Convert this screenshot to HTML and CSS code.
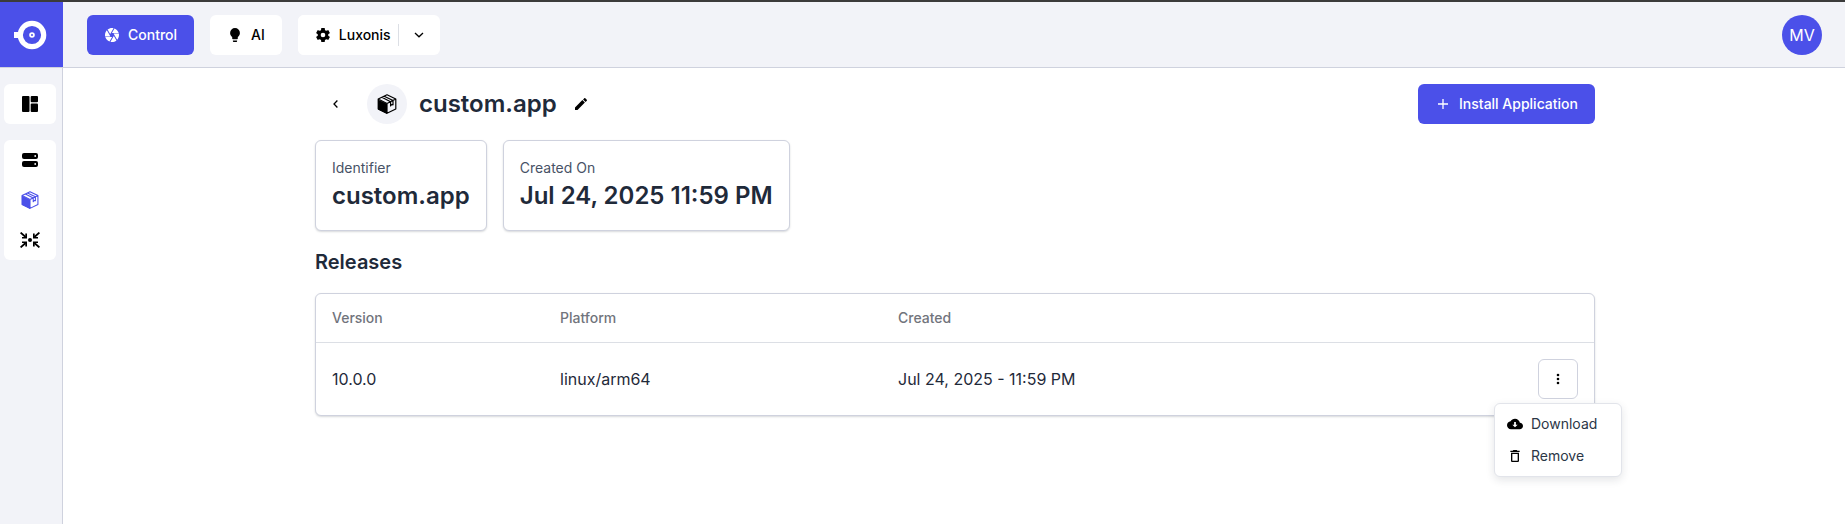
FILE: index.html
```html
<!DOCTYPE html>
<html lang="en">
<head>
<meta charset="utf-8">
<meta name="viewport" content="width=device-width, initial-scale=1">
<title>custom.app</title>
<link rel="stylesheet" href="styles.css">
</head>
<body>
<svg class="defs" aria-hidden="true">
  <symbol id="package" viewBox="0 0 20 20">
    <path fill="currentColor" d="M1 5.4 10 9.8V20L1 15.4Z"/>
    <path fill="none" stroke="currentColor" stroke-width="1.2" stroke-linejoin="round" d="M10 .8 18.8 5v10L10 19.3 1.200 15V5ZM1.200 5 10 9.500 18.800 5M10 9.500v9.700M4.800 3.300 13.600 7.700M7.200 2.200 16 6.500M13.600 7.700v4.300l1.100-1.500 1.300.4V6.500"/>
  </symbol>
</svg>
<header class="topbar">
  <a class="logo" href="#" aria-label="Home">
    <svg width="34" height="30" viewBox="0 0 34 30" fill="none" stroke="#fff">
      <circle cx="19" cy="15" r="11.7" stroke-width="5.2"/>
      <circle cx="19" cy="15" r="1.9" stroke-width="1.8"/>
      <path d="M1 15h6" stroke-width="6"/>
    </svg>
  </a>
  <nav class="apps" aria-label="Sections">
    <button class="btn btn-primary" type="button">
      <svg width="14" height="14" viewBox="2 2 20 20" fill="currentColor"><path d="M13.73 15 9.83 21.76C10.53 21.91 11.25 22 12 22c2.4 0 4.6-.85 6.32-2.25L14.66 13.4M2.46 15c.92 2.92 3.15 5.26 5.99 6.34L12.12 15M8.54 12l-3.9-6.75C3 7 2 9.39 2 12c0 .68.07 1.35.2 2h7.49M21.8 10h-7.49l.29.5 4.76 8.25C21 16.97 22 14.6 22 12c0-.69-.07-1.36-.2-2M21.54 9c-.92-2.93-3.15-5.26-5.99-6.34L11.88 9M9.4 10.5l4.77-8.26C13.47 2.09 12.75 2 12 2 9.6 2 7.4 2.84 5.68 4.25l3.66 6.35.06-.1Z"/></svg>
      Control
    </button>
    <button class="btn" type="button">
      <svg width="14" height="14" viewBox="2 2 20 20" fill="currentColor"><path d="M12 2a7 7 0 0 0-7 7c0 2.38 1.19 4.47 3 5.74V17a1 1 0 0 0 1 1h6a1 1 0 0 0 1-1v-2.26c1.81-1.27 3-3.36 3-5.74a7 7 0 0 0-7-7M9 21a1 1 0 0 0 1 1h4a1 1 0 0 0 1-1v-1H9v1Z"/></svg>
      AI
    </button>
    <div class="split">
      <button class="btn" type="button">
        <svg width="14" height="14" viewBox="2.400 2.400 19.200 19.200" fill="currentColor"><path fill-rule="evenodd" d="M19.14 12.94c.04-.3.06-.61.06-.94 0-.32-.02-.64-.07-.94l2.03-1.58c.18-.14.23-.41.12-.61l-1.92-3.32c-.12-.22-.37-.29-.59-.22l-2.39.96c-.5-.38-1.03-.7-1.62-.94l-.36-2.54c-.04-.24-.24-.41-.48-.41h-3.84c-.24 0-.43.17-.47.41l-.36 2.54c-.59.24-1.13.57-1.62.94l-2.39-.96c-.22-.08-.47 0-.59.22L2.74 8.87c-.12.21-.08.47.12.61l2.03 1.58c-.05.3-.09.63-.09.94s.02.64.07.94l-2.03 1.58c-.18.14-.23.41-.12.61l1.92 3.32c.12.22.37.29.59.22l2.39-.96c.5.38 1.03.7 1.62.94l.36 2.54c.05.24.24.41.48.41h3.84c.24 0 .44-.17.47-.41l.36-2.54c.59-.24 1.13-.56 1.62-.94l2.39.96c.22.08.47 0 .59-.22l1.92-3.32c.12-.22.07-.47-.12-.61l-2.01-1.58ZM12 15.2a3.2 3.2 0 1 1 0-6.4 3.2 3.2 0 0 1 0 6.4Z"/></svg>
        Luxonis
      </button>
      <button class="split-toggle" type="button" aria-label="Switch team">
        <svg width="10" height="6" viewBox="0 0 10 6" fill="none" stroke="currentColor" stroke-width="1.3"><path d="m1 1 4 3.800L9 1"/></svg>
      </button>
    </div>
  </nav>
  <button class="avatar" type="button">MV</button>
</header>
<div class="layout">
  <nav class="sidebar" aria-label="Main">
    <div class="group">
      <a href="#" aria-label="Dashboard">
        <svg width="16" height="16" viewBox="0 0 16 16" fill="currentColor"><rect width="7.500" height="16" rx="1"/><rect x="8.700" width="7.300" height="6.300" rx="1"/><rect x="8.700" y="7.500" width="7.300" height="8.500" rx="1"/></svg>
      </a>
    </div>
    <div class="group">
      <a href="#" aria-label="Devices">
        <svg width="16" height="14" viewBox="0 0 16 14" fill="currentColor"><rect width="16" height="6" rx="2"/><rect y="8" width="16" height="6" rx="2"/><circle cx="13.2" cy="3" r=".9" fill="#fff"/><circle cx="13.2" cy="11" r=".9" fill="#fff"/></svg>
      </a>
      <a class="active" href="#" aria-label="Applications">
        <svg width="18" height="18"><use href="#package"/></svg>
      </a>
      <a href="#" aria-label="Hub">
        <svg width="20" height="16" viewBox="0 0 20 16" fill="none" stroke="currentColor" stroke-width="1.8"><circle cx="10" cy="8" r="2" fill="currentColor" stroke="none"/><path d="m.6.6 5 4.400M.6 15.400l5-4.400M19.400.6l-5 4.400M19.400 15.400l-5-4.400"/><path fill="currentColor" stroke="none" d="M7 1.600v5H2V4.900h3.300V1.600ZM13 1.600v5h5V4.900h-3.300V1.600ZM7 14.400v-5H2v1.700h3.300v3.300ZM13 14.400v-5h5v1.700h-3.300v3.300Z"/></svg>
      </a>
    </div>
  </nav>
  <main class="main">
    <div class="container">
      <div class="page-head">
        <button class="icon-btn" type="button" aria-label="Back">
          <svg width="5" height="8" viewBox="0 0 5 8" fill="none" stroke="currentColor" stroke-width="1.3"><path d="M4.400.5 1 4l3.400 3.500"/></svg>
        </button>
        <span class="app-icon"><svg width="20" height="20"><use href="#package"/></svg></span>
        <h1 class="title">custom.app</h1>
        <button class="icon-btn edit" type="button" aria-label="Edit name">
          <svg width="12" height="12" viewBox="3 3 18 18" fill="currentColor"><path d="M20.71 7.04c.39-.39.39-1.04 0-1.41l-2.34-2.34c-.37-.39-1.02-.39-1.41 0l-1.84 1.83 3.75 3.75M3 17.25V21h3.75L17.81 9.93l-3.75-3.75L3 17.25Z"/></svg>
        </button>
        <button class="btn btn-primary install" type="button">
          <svg width="14" height="14" viewBox="0 0 14 14" fill="none" stroke="currentColor" stroke-width="1.3"><path d="M7 2v10M2 7h10"/></svg>
          Install Application
        </button>
      </div>
      <dl class="facts">
        <div class="card fact"><dt>Identifier</dt><dd>custom.app</dd></div>
        <div class="card fact"><dt>Created On</dt><dd>Jul 24, 2025 11:59 PM</dd></div>
      </dl>
      <h2 class="subtitle">Releases</h2>
      <div class="card">
        <table class="releases">
          <thead>
            <tr><th class="col-version" scope="col">Version</th><th class="col-platform" scope="col">Platform</th><th scope="col">Created</th><th class="col-actions"></th></tr>
          </thead>
          <tbody>
            <tr>
              <td>10.0.0</td>
              <td>linux/arm64</td>
              <td>Jul 24, 2025 - 11:59 PM</td>
              <td>
                <div class="actions">
                  <button class="more" type="button" aria-label="More actions" aria-expanded="true">
                    <svg width="4" height="12" viewBox="0 0 4 12" fill="currentColor"><circle cx="2" cy="2" r="1.3"/><circle cx="2" cy="6" r="1.3"/><circle cx="2" cy="10" r="1.3"/></svg>
                  </button>
                  <div class="menu" role="menu">
                    <button type="button" role="menuitem">
                      <svg width="16" height="16" viewBox="0 0 24 24" fill="currentColor"><path fill-rule="evenodd" d="M19.35 10.04C18.67 6.59 15.64 4 12 4 9.11 4 6.6 5.64 5.35 8.04 2.34 8.36 0 10.91 0 14c0 3.31 2.69 6 6 6h13c2.76 0 5-2.24 5-5 0-2.64-2.05-4.78-4.65-4.96ZM16 13l-4 4-4-4h2.7V9h2.6v4H16Z"/></svg>
                      Download
                    </button>
                    <button type="button" role="menuitem">
                      <svg width="16" height="16" viewBox="0 0 24 24" fill="currentColor"><path fill-rule="evenodd" d="M6 19c0 1.1.9 2 2 2h8c1.1 0 2-.9 2-2V7H6v12ZM8 9h8v10H8V9Zm7.500-5-1-1h-5l-1 1H5v2h14V4Z"/></svg>
                      Remove
                    </button>
                  </div>
                </div>
              </td>
            </tr>
          </tbody>
        </table>
      </div>
    </div>
  </main>
</div>
</body>
</html>
```
FILE: styles.css
```css
:root {
  --primary: #4b50e9;
  --surface: #f2f3f8;
  --border: #cfd2de;
  --line: #dcdfe5;
  --text: #1f2a3a;
}

* { box-sizing: border-box; }

body {
  display: flex;
  flex-direction: column;
  min-height: 100vh;
  margin: 0;
  border-top: 2px solid #3b3b3b;
  background: #fff;
  color: var(--text);
  font: 16px/24px Inter, "Liberation Sans", sans-serif;
}

button {
  margin: 0;
  padding: 0;
  border: 0;
  background: none;
  color: #000;
  font: inherit;
  cursor: pointer;
}

svg { display: block; flex: none; }

.defs { position: absolute; width: 0; height: 0; }

.topbar {
  display: flex;
  align-items: center;
  height: 66px;
  padding-right: 23px;
  border-bottom: 1px solid var(--border);
  background: var(--surface);
}

.logo {
  display: flex;
  align-items: center;
  justify-content: center;
  align-self: stretch;
  width: 63px;
  padding-right: 4px;
  background: var(--primary);
}

.apps { display: flex; gap: 16px; margin-left: 24px; }

.btn {
  display: flex;
  align-items: center;
  gap: 9px;
  height: 40px;
  padding: 0 17px 0 18px;
  border-radius: 6px;
  background: #fff;
  font-size: 14px;
  font-weight: 500;
  line-height: 20px;
}

.btn-primary { background: var(--primary); color: #fff; }

.split { display: flex; align-items: center; border-radius: 6px; background: #fff; }
.split .btn { padding-right: 7px; }

.split-toggle {
  display: flex;
  align-items: center;
  justify-content: center;
  width: 42px;
  height: 22px;
  border-left: 1px solid var(--line);
}

.avatar {
  width: 40px;
  height: 40px;
  margin-left: auto;
  border-radius: 50%;
  background: var(--primary);
  color: #fff;
}

.layout { display: flex; flex: 1; }

.sidebar {
  display: flex;
  flex-direction: column;
  gap: 16px;
  width: 63px;
  padding: 16px 6px 16px 4px;
  border-right: 1px solid var(--border);
  background: var(--surface);
}

.group { border-radius: 6px; background: #fff; }

.group a {
  display: flex;
  align-items: center;
  justify-content: center;
  height: 40px;
  color: #000;
}

.group .active { color: var(--primary); }

.main { flex: 1; min-width: 0; padding: 16px 0 24px 2px; }
.container { max-width: 1280px; margin: 0 auto; }

.page-head { display: flex; align-items: center; }

.icon-btn {
  display: flex;
  align-items: center;
  justify-content: center;
  width: 40px;
  height: 40px;
}

.app-icon {
  display: flex;
  align-items: center;
  justify-content: center;
  width: 40px;
  height: 40px;
  margin: 0 12px;
  border-radius: 50%;
  background: var(--surface);
  color: #000;
}

.title, .fact dd { margin: 0; font-size: 24px; font-weight: 600; line-height: 32px; }

.edit { margin-left: 4px; }
.install { margin-left: auto; }

.card {
  border: 1px solid var(--border);
  border-radius: 6px;
  background: #fff;
  box-shadow: 0 1px 2px rgba(31, 42, 58, .18);
}

.facts { display: flex; gap: 16px; margin: 16px 0; }
.fact { padding: 17px 16px 18px; }
.fact dt { margin-bottom: 2px; color: #475266; font-size: 14px; line-height: 20px; }

.subtitle { margin: 0 0 16px; font-size: 20px; font-weight: 600; line-height: 30px; }

.releases { width: 100%; border-collapse: collapse; table-layout: fixed; }
.releases th, .releases td { padding: 0 16px; text-align: left; }

.releases th {
  height: 48px;
  border-bottom: 1px solid var(--line);
  color: #71747c;
  font-size: 14px;
  font-weight: 500;
}

.releases td { height: 73px; }
.col-version { width: 228px; }
.col-platform { width: 338px; }
.col-actions { width: 72px; }

.actions { position: relative; width: 40px; }

.more {
  display: flex;
  align-items: center;
  justify-content: center;
  width: 40px;
  height: 40px;
  border: 1px solid var(--border);
  border-radius: 6px;
}

.menu {
  position: absolute;
  top: 44px;
  right: -44px;
  width: 128px;
  padding: 4px;
  border: 1px solid #e2e4ea;
  border-radius: 6px;
  background: #fff;
  box-shadow: 0 3px 8px rgba(31, 42, 58, .12);
}

.menu button {
  display: flex;
  align-items: center;
  gap: 8px;
  width: 100%;
  height: 32px;
  padding: 0 8px;
  color: #2b3646;
  font-size: 14px;
}

.menu svg { color: #000; }
```
